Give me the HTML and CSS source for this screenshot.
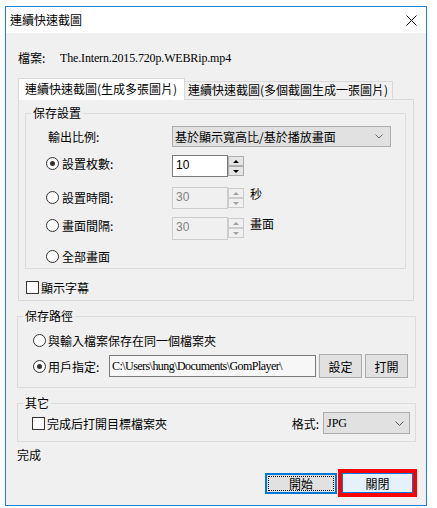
FILE: index.html
```html
<!DOCTYPE html>
<html lang="zh-Hant">
<head>
  <meta charset="UTF-8" />
  <title>連續快速截圖</title>
  <link rel="stylesheet" href="styles.css">
</head>
<body>
  <div class="window">
    <div class="titlebar">
      <span class="title">連續快速截圖</span>
      <svg class="close" width="11" height="11" viewBox="0 0 11 11"><path d="M0.5 0.5L10.5 10.5M10.5 0.5L0.5 10.5" stroke="#000" stroke-width="1"/></svg>
    </div>

    <div class="body">
      <div class="file-row">
        <span class="file-label">檔案:</span>
        <span class="file-name">The.Intern.2015.720p.WEBRip.mp4</span>
      </div>

      <div class="tabs">
        <div class="tab active">連續快速截圖(生成多張圖片)</div>
        <div class="tab">連續快速截圖(多個截圖生成一張圖片)</div>
      </div>

      <div class="tab-panel">
        <div class="group group-save">
          <div class="legend">保存設置</div>

          <div class="row row-ratio">
            <span class="row-label">輸出比例:</span>
            <div class="combo combo-ratio">
              <span>基於顯示寬高比/基於播放畫面</span>
              <svg class="chev" width="8" height="5" viewBox="0 0 8 5"><path d="M0.5 0.5L4 4L7.5 0.5" fill="none" stroke="#666"/></svg>
            </div>
          </div>

          <div class="row row-count">
            <div class="option"><span class="radio checked"></span>設置枚數:</div>
            <div class="spin">
              <span class="spin-input">10</span>
              <span class="spin-btns">
                <span class="spin-btn"><i class="arrow up"></i></span>
                <span class="spin-btn"><i class="arrow down"></i></span>
              </span>
            </div>
          </div>

          <div class="row row-time">
            <div class="option"><span class="radio"></span>設置時間:</div>
            <div class="spin disabled">
              <span class="spin-input">30</span>
              <span class="spin-btns">
                <span class="spin-btn"><i class="arrow up"></i></span>
                <span class="spin-btn"><i class="arrow down"></i></span>
              </span>
            </div>
            <span class="unit">秒</span>
          </div>

          <div class="row row-frame">
            <div class="option"><span class="radio"></span>畫面間隔:</div>
            <div class="spin disabled">
              <span class="spin-input">30</span>
              <span class="spin-btns">
                <span class="spin-btn"><i class="arrow up"></i></span>
                <span class="spin-btn"><i class="arrow down"></i></span>
              </span>
            </div>
            <span class="unit">畫面</span>
          </div>

          <div class="row row-all">
            <div class="option"><span class="radio"></span>全部畫面</div>
          </div>
        </div>

        <div class="check-row subtitle-row"><span class="checkbox"></span>顯示字幕</div>
      </div>

      <div class="group group-path">
        <div class="legend">保存路徑</div>
        <div class="row row-same">
          <div class="option"><span class="radio"></span>與輸入檔案保存在同一個檔案夾</div>
        </div>
        <div class="row row-custom">
          <div class="option option-custom"><span class="radio checked"></span>用戶指定:</div>
          <span class="path-input">C:\Users\hung\Documents\GomPlayer\</span>
          <span class="btn btn-small">設定</span>
          <span class="btn btn-small">打開</span>
        </div>
      </div>

      <div class="group group-other">
        <div class="legend">其它</div>
        <div class="row row-other">
          <div class="check-row"><span class="checkbox"></span>完成后打開目標檔案夾</div>
          <div class="format">
            <span>格式:</span>
            <div class="combo combo-format">
              <span class="format-value">JPG</span>
              <svg class="chev" width="9" height="5" viewBox="0 0 9 5"><path d="M0.5 0.5L4.5 4.5L8.5 0.5" fill="none" stroke="#555"/></svg>
            </div>
          </div>
        </div>
      </div>

      <div class="status">完成</div>

      <div class="actions">
        <span class="btn btn-start"><span class="focus">開始</span></span>
        <span class="highlight"><span class="btn btn-close">關閉</span></span>
      </div>
    </div>
  </div>
</body>
</html>
```

FILE: styles.css
```css
* { box-sizing: border-box; margin: 0; padding: 0; }
body {
  background: #fff;
  font-family: "Noto Sans CJK TC", "Noto Sans", sans-serif;
  font-size: 12px;
  color: #000;
}

.window {
  width: 422px;
  height: 500px;
  margin: 6px 0 0 5px;
  border: 1px solid #1b84d6;
  display: flex;
  flex-direction: column;
}

.titlebar {
  height: 26px;
  background: #fff;
  display: flex;
  align-items: center;
  justify-content: space-between;
  padding: 0 9px 0 4px;
}

.title { line-height: 14px; }

.body {
  flex: 1;
  background: #f0f0f0;
  padding: 0 10px 0 11px;
}

.file-row {
  margin-top: 17px;
  height: 16px;
  line-height: 16px;
  padding-left: 1px;
  display: flex;
}

.file-label { width: 42px; }

.file-name,
.path-input,
.format-value {
  font-family: "Liberation Serif", serif;
}

.file-name { letter-spacing: -0.15px; }

/* tabs */
.tabs {
  margin: 12px 0 0 1px;
  height: 21px;
  display: flex;
  align-items: flex-end;
}

.tab {
  width: 208px;
  height: 18px;
  border: 1px solid #d9d9d9;
  border-bottom: 0;
  border-left: 0;
  padding-left: 3px;
  line-height: 16px;
  white-space: nowrap;
}

.tab.active {
  width: 167px;
  height: 22px;
  margin-bottom: -1px;
  border-left: 1px solid #d9d9d9;
  background: #fff;
  padding-left: 6px;
  line-height: 20px;
  position: relative;
  z-index: 1;
}

.tab-panel {
  margin-left: 1px;
  width: 396px;
  height: 202px;
  border: 1px solid #d9d9d9;
}

/* group boxes */
.group { border: 1px solid #dcdcdc; }

.legend {
  width: fit-content;
  height: 14px;
  margin: -8px 0 0 5px;
  padding: 0 2px;
  line-height: 14px;
  background: #f0f0f0;
}

.group-save {
  margin: 13px 0 0 6px;
  width: 381px;
  height: 156px;
}

.row {
  display: flex;
  align-items: flex-start;
}

.row-label { width: 124px; line-height: 16px; }

.option {
  display: flex;
  align-items: center;
  gap: 3px;
  width: 126px;
  height: 16px;
  white-space: nowrap;
}

.radio {
  width: 13px;
  height: 13px;
  border: 1px solid #333;
  border-radius: 50%;
  background: #fff;
  display: flex;
  align-items: center;
  justify-content: center;
  flex: none;
}

.radio.checked::after {
  content: "";
  width: 5px;
  height: 5px;
  border-radius: 50%;
  background: #333;
}

.checkbox {
  width: 13px;
  height: 13px;
  border: 1px solid #333;
  background: #fff;
  flex: none;
}

.row-ratio {
  margin-top: 6px;
  height: 21px;
  padding-left: 22px;
  align-items: center;
}

.combo {
  display: flex;
  align-items: center;
  justify-content: space-between;
  background: #e1e1e1;
  border: 1px solid #adadad;
}

.combo-ratio {
  width: 219px;
  height: 21px;
  padding: 0 7px 0 2px;
}

.row-count { margin-top: 8px; height: 22px; padding-left: 20px; }
.row-time { margin-top: 10px; height: 22px; padding-left: 20px; }
.row-frame { margin-top: 8px; height: 23px; padding-left: 20px; }
.row-all { margin-top: 8px; padding-left: 20px; }

.row-time .option { margin-top: 2px; }

.spin {
  display: flex;
  height: 100%;
}

.spin-input {
  width: 56px;
  height: 100%;
  border: 1px solid #7a7a7a;
  background: #fff;
  padding: 2px 0 0 3px;
  line-height: 15px;
  font-family: "Liberation Sans", sans-serif;
}

.spin-btns {
  width: 16px;
  display: flex;
  flex-direction: column;
  padding-top: 1px;
}

.spin-btn {
  height: 10px;
  border: 1px solid #adadad;
  background: #e5e5e5;
  display: flex;
  align-items: center;
  justify-content: center;
}

.arrow {
  width: 0;
  height: 0;
  border-left: 3px solid transparent;
  border-right: 3px solid transparent;
}

.arrow.up { border-bottom: 3px solid #000; }
.arrow.down { border-top: 3px solid #000; }

.spin.disabled .spin-input {
  border-color: #cccccc;
  background: #f0f0f0;
  color: #838383;
}

.spin.disabled .spin-btn {
  border-color: #cccccc;
  background: #f0f0f0;
}

.spin.disabled .arrow.up { border-bottom-color: #a0a0a0; }
.spin.disabled .arrow.down { border-top-color: #a0a0a0; }

.unit {
  margin-left: 6px;
  line-height: 14px;
}

.check-row {
  display: flex;
  align-items: center;
  gap: 2px;
  height: 16px;
  white-space: nowrap;
}

.subtitle-row { margin: 10px 0 0 7px; }

/* save path */
.group-path {
  margin-top: 15px;
  height: 72px;
}

.row-same { margin-top: 9px; padding-left: 15px; }
.row-same .option { width: auto; gap: 2px; }

.row-custom {
  margin-top: 6px;
  height: 24px;
  padding-left: 15px;
  align-items: center;
}

.option-custom { width: 76px; gap: 2px; }

.path-input {
  width: 207px;
  height: 22px;
  border: 1px solid #7a7a7a;
  background: #f7f7f7;
  padding-left: 2px;
  line-height: 20px;
  letter-spacing: -0.55px;
  white-space: nowrap;
  overflow: hidden;
}

.btn {
  display: flex;
  align-items: center;
  justify-content: center;
  background: #e1e1e1;
  border: 1px solid #adadad;
}

.btn-small {
  width: 43px;
  height: 24px;
  margin-left: 3px;
}

/* other */
.group-other {
  margin-top: 15px;
  height: 39px;
}

.row-other {
  margin-top: 2px;
  height: 22px;
  padding: 0 5px 0 14px;
  align-items: center;
  justify-content: space-between;
}

.format {
  display: flex;
  align-items: center;
  gap: 4px;
}

.combo-format {
  width: 87px;
  height: 22px;
  padding: 0 5px 0 3px;
}

.status {
  margin-top: 5px;
  height: 16px;
  line-height: 16px;
}

.actions {
  margin: 6px -1px 0 0;
  display: flex;
  justify-content: flex-end;
  align-items: center;
  gap: 1px;
}

.btn-start {
  width: 72px;
  height: 21px;
  border: 2px solid #0078d7;
  padding: 1px;
}

.btn-start .focus {
  width: 100%;
  height: 100%;
  border: 1px dotted #000;
  display: flex;
  align-items: center;
  justify-content: center;
}

.highlight {
  border: 4px solid #ff0000;
}

.btn-close {
  width: 71px;
  height: 20px;
  background: #e5f1fb;
  border-color: #0078d7;
}
```
